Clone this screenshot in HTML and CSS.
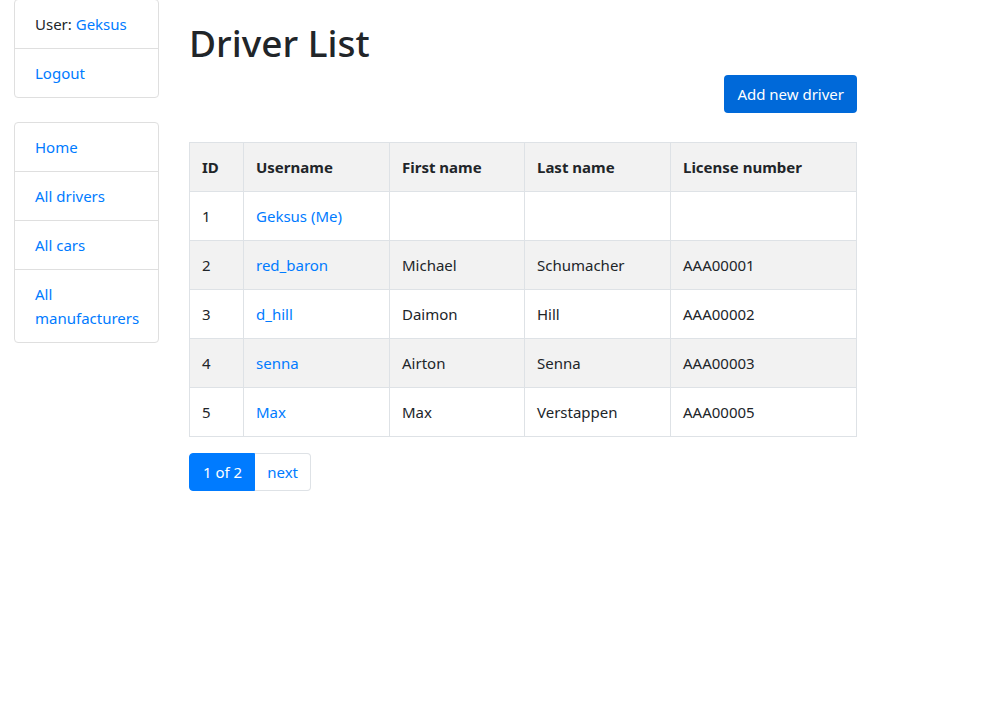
FILE: index.html
```html
<!DOCTYPE html>
<html lang="en">
<head>
<meta charset="utf-8">
<title>Driver List</title>
<link rel="stylesheet" href="styles.css">
</head>
<body>
<div class="page">
  <aside class="sidebar">
    <ul class="list-group">
      <li class="list-item">User: <a href="#">Geksus</a></li>
      <li class="list-item"><a href="#">Logout</a></li>
    </ul>
    <ul class="list-group nav-group">
      <li class="list-item"><a href="#">Home</a></li>
      <li class="list-item"><a href="#">All drivers</a></li>
      <li class="list-item"><a href="#">All cars</a></li>
      <li class="list-item"><a href="#">All manufacturers</a></li>
    </ul>
  </aside>
  <main class="main">
    <h1 class="title">Driver List</h1>
    <div class="actions"><a href="#" class="btn">Add new driver</a></div>
    <table class="table">
      <thead>
        <tr><th class="c-id">ID</th><th class="c-user">Username</th><th class="c-first">First name</th><th class="c-last">Last name</th><th>License number</th></tr>
      </thead>
      <tbody>
        <tr class="odd"><td>1</td><td><a href="#">Geksus (Me)</a></td><td></td><td></td><td></td></tr>
        <tr class="even"><td>2</td><td><a href="#">red_baron</a></td><td>Michael</td><td>Schumacher</td><td>AAA00001</td></tr>
        <tr class="odd"><td>3</td><td><a href="#">d_hill</a></td><td>Daimon</td><td>Hill</td><td>AAA00002</td></tr>
        <tr class="even"><td>4</td><td><a href="#">senna</a></td><td>Airton</td><td>Senna</td><td>AAA00003</td></tr>
        <tr class="odd"><td>5</td><td><a href="#">Max</a></td><td>Max</td><td>Verstappen</td><td>AAA00005</td></tr>
      </tbody>
    </table>
    <nav class="pagination">
      <span class="page-link active">1 of 2</span>
      <a href="#" class="page-link">next</a>
    </nav>
  </main>
</div>
</body>
</html>
```

FILE: styles.css
```css
* { box-sizing: border-box; }
html, body { margin: 0; padding: 0; }
body {
  font-family: "Noto Sans", "Open Sans", sans-serif;
  font-size: 15px;
  line-height: 24px;
  color: #212529;
  background: #fff;
}
a { color: #007bff; text-decoration: none; }
.page {
  display: flex;
  align-items: flex-start;
  padding-left: 14px;
  gap: 30px;
}
.sidebar { width: 145px; flex: none; margin-top: -1px; }
.list-group {
  list-style: none;
  margin: 0;
  padding: 0;
  border: 1px solid #dfdfdf;
  border-radius: 4px;
}
.nav-group { margin-top: 24px; }
.list-item {
  padding: 12px 20px;
  border-top: 1px solid #dfdfdf;
}
.list-item:first-child { border-top: none; }
.main { width: 668px; flex: none; padding-top: 19px; }
.title {
  margin: 0 0 7px 0;
  font-size: 37px;
  line-height: 48px;
  font-weight: 500;
}
.actions { display: flex; justify-content: flex-end; }
.btn {
  display: inline-block;
  background: #0069d9;
  color: #fff;
  padding: 7px 13px;
  border-radius: 4px;
  line-height: 24px;
  margin-top: 1px;
}
.table {
  margin-top: 29px;
  width: 100%;
  border-collapse: collapse;
}
.table th, .table td {
  border: 1px solid #dee2e6;
  padding: 12px;
  text-align: left;
  height: 49px;
  vertical-align: top;
}
.table th { font-weight: 700; background: #f2f2f2; }
.table tr.even td { background: #f2f2f2; }
.c-id { width: 54px; }
.c-user { width: 146px; }
.c-first { width: 135px; }
.c-last { width: 146px; }
.pagination { display: flex; margin-top: 16px; }
.page-link {
  display: block;
  padding: 6px 12px 6px 13px;
  line-height: 24px;
  border: 1px solid #dee2e6;
}
.page-link.active {
  background: #007bff;
  border-color: #007bff;
  color: #fff;
  border-radius: 4px 0 0 4px;
}
.page-link + .page-link { border-left: none; border-radius: 0 4px 4px 0; padding: 6px 12px; }
```
